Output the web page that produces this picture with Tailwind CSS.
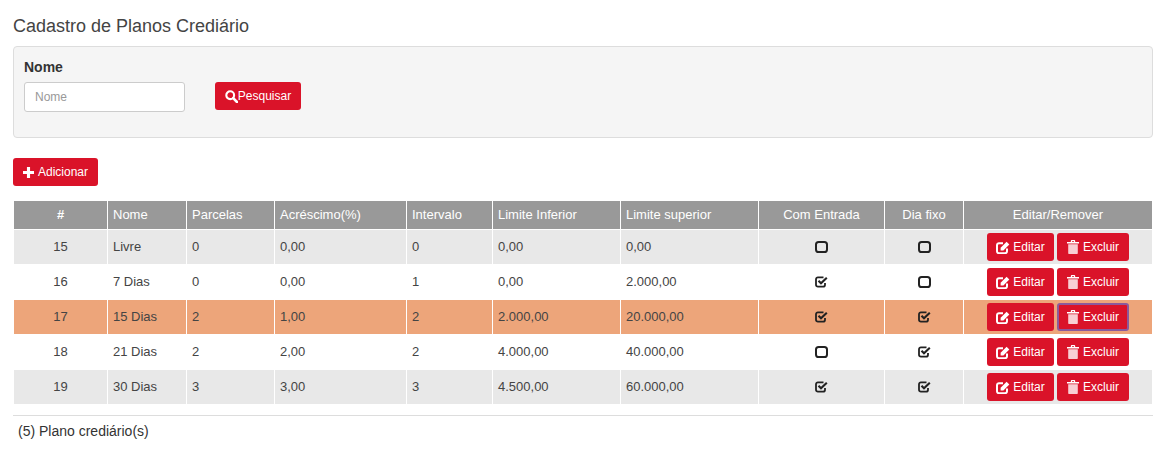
<!DOCTYPE html>
<html>
<head>
<meta charset="UTF-8">
<title>Cadastro de Planos Crediário</title>
<script src="https://cdn.jsdelivr.net/npm/@tailwindcss/browser@4"></script>
</head>
<body class="bg-white font-['Liberation_Sans',Arial,sans-serif] text-[13px] text-[#333] overflow-hidden">
<svg class="hidden">
  <symbol id="i-search" viewBox="0 0 13 13"><circle cx="5.2" cy="5.2" r="3.9" fill="none" stroke="currentColor" stroke-width="2.1"/><path d="M8.2 8.2 12 12" stroke="currentColor" stroke-width="2.6" stroke-linecap="round"/></symbol>
  <symbol id="i-plus" viewBox="0 0 12 12"><path d="M4.3 0h3.4v4.3H12v3.4H7.7V12H4.3V7.7H0V4.3h4.3z" fill="currentColor"/></symbol>
  <symbol id="i-edit" viewBox="0 0 14 13"><path d="M7 2.2H3A2 2 0 0 0 1 4.2v6a2 2 0 0 0 2 2h6a2 2 0 0 0 2-2V7.6" fill="none" stroke="currentColor" stroke-width="2"/><path d="M4.6 6.7 10.6.8l2.7 2.7-5.900 6H4.600z" fill="currentColor"/></symbol>
  <symbol id="i-trash" viewBox="0 0 12 14"><path d="M3.800 1.900V1c0-.5.4-.9.9-.9h2.600c.5 0 .9.4.9.900v.9H12v1.600H0V1.900zM5 1.900h2V1.200H5z" fill="currentColor" fill-rule="evenodd"/><path d="M1.200 4.300h9.600v8.700c0 .6-.4 1-1 1H2.200c-.6 0-1-.4-1-1z" fill="currentColor" opacity=".8"/></symbol>
  <symbol id="i-off" viewBox="0 0 13 12"><rect x="1" y="1" width="11" height="10" rx="2.6" fill="none" stroke="currentColor" stroke-width="2"/></symbol>
  <symbol id="i-on" viewBox="0 0 13 12"><path d="M10 7v1.700c0 1.200-.8 2-2 2H3c-1.200 0-2-.8-2-2V3.300c0-1.200.8-2 2-2h5.500" fill="none" stroke="currentColor" stroke-width="1.800"/><path d="M3.500 4.800 6 7.300 11.800 1.700" fill="none" stroke="currentColor" stroke-width="2.100"/></symbol>
</svg>

<div class="pl-[13px] pr-[16px]">
  <h1 class="pt-[15px] h-[46px] text-[18px] leading-[22px] font-normal text-[#444]">Cadastro de Planos Crediário</h1>

  <div class="h-[92px] rounded-[4px] border border-[#ddd] bg-[#f5f5f5] px-[10px] pt-[11px]">
    <label class="block h-[24px] text-[14px] leading-[19px] font-bold text-[#333]">Nome</label>
    <div class="flex items-start gap-[30px]">
      <input type="text" placeholder="Nome" class="h-[30px] w-[161px] rounded-[3px] border border-[#ccc] bg-white px-[10px] text-[12px] placeholder:text-[#999] outline-none">
      <button class="flex h-[28px] w-[86px] items-center justify-center rounded-[3px] bg-[#da1329] text-[12px] text-white">
        <svg class="h-[13px] w-[13px]"><use href="#i-search"/></svg>Pesquisar
      </button>
    </div>
  </div>

  <button class="mt-[20px] flex h-[28px] w-[85px] items-center justify-center gap-[4px] rounded-[3px] bg-[#da1329] text-[12px] text-white">
    <svg class="h-[11px] w-[11px]"><use href="#i-plus"/></svg>Adicionar
  </button>

  <table class="mt-[15px] ml-px w-[1138px] table-fixed border-separate border-spacing-0 text-[13px] text-[#444]">
    <colgroup>
      <col class="w-[94px]"><col class="w-[79px]"><col class="w-[88px]"><col class="w-[132px]"><col class="w-[86px]"><col class="w-[128px]"><col class="w-[138px]"><col class="w-[126px]"><col class="w-[79px]"><col class="w-[188px]">
    </colgroup>
    <thead>
      <tr class="h-[29px] text-white bg-[#999] [&>th]:border-b [&>th]:border-white">
        <th class="border-r font-bold text-center">#</th>
        <th class="border-r px-[5px] font-normal text-left">Nome</th>
        <th class="border-r px-[5px] font-normal text-left">Parcelas</th>
        <th class="border-r px-[5px] font-normal text-left">Acréscimo(%)</th>
        <th class="border-r px-[5px] font-normal text-left">Intervalo</th>
        <th class="border-r px-[5px] font-normal text-left">Limite Inferior</th>
        <th class="border-r px-[5px] font-normal text-left">Limite superior</th>
        <th class="border-r font-normal text-center">Com Entrada</th>
        <th class="border-r font-normal text-center">Dia fixo</th>
        <th class="font-normal text-center">Editar/Remover</th>
      </tr>
    </thead>
    <tbody class="[&_td]:border-b [&_td]:border-white">
      <tr class="h-[35px] bg-[#e8e8e8]">
        <td class="border-r text-center">15</td>
        <td class="border-r px-[5px]">Livre</td>
        <td class="border-r px-[5px]">0</td>
        <td class="border-r px-[5px]">0,00</td>
        <td class="border-r px-[5px]">0</td>
        <td class="border-r px-[5px]">0,00</td>
        <td class="border-r px-[5px]">0,00</td>
        <td class="border-r"><svg class="mx-auto h-[12px] w-[13px] text-[#222]"><use href="#i-off"/></svg></td>
        <td class="border-r"><svg class="mx-auto h-[12px] w-[13px] text-[#222]"><use href="#i-off"/></svg></td>
        <td><div class="flex justify-center gap-[3px] text-[12px]">
          <button class="flex h-[28px] w-[67px] items-center justify-center gap-[3px] rounded-[3px] bg-[#da1329] text-white"><svg class="h-[13px] w-[14px]"><use href="#i-edit"/></svg>Editar</button>
          <button class="flex h-[28px] w-[72px] items-center justify-center gap-[4px] rounded-[3px] bg-[#da1329] text-white"><svg class="h-[14px] w-[12px]"><use href="#i-trash"/></svg>Excluir</button>
        </div></td>
      </tr>
      <tr class="h-[35px] bg-white">
        <td class="border-r text-center">16</td>
        <td class="border-r px-[5px]">7 Dias</td>
        <td class="border-r px-[5px]">0</td>
        <td class="border-r px-[5px]">0,00</td>
        <td class="border-r px-[5px]">1</td>
        <td class="border-r px-[5px]">0,00</td>
        <td class="border-r px-[5px]">2.000,00</td>
        <td class="border-r"><svg class="mx-auto h-[12px] w-[13px] text-[#222]"><use href="#i-on"/></svg></td>
        <td class="border-r"><svg class="mx-auto h-[12px] w-[13px] text-[#222]"><use href="#i-off"/></svg></td>
        <td><div class="flex justify-center gap-[3px] text-[12px]">
          <button class="flex h-[28px] w-[67px] items-center justify-center gap-[3px] rounded-[3px] bg-[#da1329] text-white"><svg class="h-[13px] w-[14px]"><use href="#i-edit"/></svg>Editar</button>
          <button class="flex h-[28px] w-[72px] items-center justify-center gap-[4px] rounded-[3px] bg-[#da1329] text-white"><svg class="h-[14px] w-[12px]"><use href="#i-trash"/></svg>Excluir</button>
        </div></td>
      </tr>
      <tr class="h-[35px] bg-[#eda57a]">
        <td class="border-r text-center">17</td>
        <td class="border-r px-[5px]">15 Dias</td>
        <td class="border-r px-[5px]">2</td>
        <td class="border-r px-[5px]">1,00</td>
        <td class="border-r px-[5px]">2</td>
        <td class="border-r px-[5px]">2.000,00</td>
        <td class="border-r px-[5px]">20.000,00</td>
        <td class="border-r"><svg class="mx-auto h-[12px] w-[13px] text-[#222]"><use href="#i-on"/></svg></td>
        <td class="border-r"><svg class="mx-auto h-[12px] w-[13px] text-[#222]"><use href="#i-on"/></svg></td>
        <td><div class="flex justify-center gap-[3px] text-[12px]">
          <button class="flex h-[28px] w-[67px] items-center justify-center gap-[3px] rounded-[3px] bg-[#da1329] text-white"><svg class="h-[13px] w-[14px]"><use href="#i-edit"/></svg>Editar</button>
          <button class="flex h-[28px] w-[72px] items-center justify-center gap-[4px] rounded-[3px] border-2 border-[#8a5a9c] bg-[#da1329] text-white"><svg class="h-[14px] w-[12px]"><use href="#i-trash"/></svg>Excluir</button>
        </div></td>
      </tr>
      <tr class="h-[35px] bg-white">
        <td class="border-r text-center">18</td>
        <td class="border-r px-[5px]">21 Dias</td>
        <td class="border-r px-[5px]">2</td>
        <td class="border-r px-[5px]">2,00</td>
        <td class="border-r px-[5px]">2</td>
        <td class="border-r px-[5px]">4.000,00</td>
        <td class="border-r px-[5px]">40.000,00</td>
        <td class="border-r"><svg class="mx-auto h-[12px] w-[13px] text-[#222]"><use href="#i-off"/></svg></td>
        <td class="border-r"><svg class="mx-auto h-[12px] w-[13px] text-[#222]"><use href="#i-on"/></svg></td>
        <td><div class="flex justify-center gap-[3px] text-[12px]">
          <button class="flex h-[28px] w-[67px] items-center justify-center gap-[3px] rounded-[3px] bg-[#da1329] text-white"><svg class="h-[13px] w-[14px]"><use href="#i-edit"/></svg>Editar</button>
          <button class="flex h-[28px] w-[72px] items-center justify-center gap-[4px] rounded-[3px] bg-[#da1329] text-white"><svg class="h-[14px] w-[12px]"><use href="#i-trash"/></svg>Excluir</button>
        </div></td>
      </tr>
      <tr class="h-[35px] bg-[#e8e8e8]">
        <td class="border-r text-center">19</td>
        <td class="border-r px-[5px]">30 Dias</td>
        <td class="border-r px-[5px]">3</td>
        <td class="border-r px-[5px]">3,00</td>
        <td class="border-r px-[5px]">3</td>
        <td class="border-r px-[5px]">4.500,00</td>
        <td class="border-r px-[5px]">60.000,00</td>
        <td class="border-r"><svg class="mx-auto h-[12px] w-[13px] text-[#222]"><use href="#i-on"/></svg></td>
        <td class="border-r"><svg class="mx-auto h-[12px] w-[13px] text-[#222]"><use href="#i-on"/></svg></td>
        <td><div class="flex justify-center gap-[3px] text-[12px]">
          <button class="flex h-[28px] w-[67px] items-center justify-center gap-[3px] rounded-[3px] bg-[#da1329] text-white"><svg class="h-[13px] w-[14px]"><use href="#i-edit"/></svg>Editar</button>
          <button class="flex h-[28px] w-[72px] items-center justify-center gap-[4px] rounded-[3px] bg-[#da1329] text-white"><svg class="h-[14px] w-[12px]"><use href="#i-trash"/></svg>Excluir</button>
        </div></td>
      </tr>
    </tbody>
  </table>

  <div class="mt-[10px] border-t border-[#ddd] px-[5px] pt-[7px] text-[14px] leading-[16px] text-[#333]">(5) Plano crediário(s)</div>
</div>
</body>
</html>
